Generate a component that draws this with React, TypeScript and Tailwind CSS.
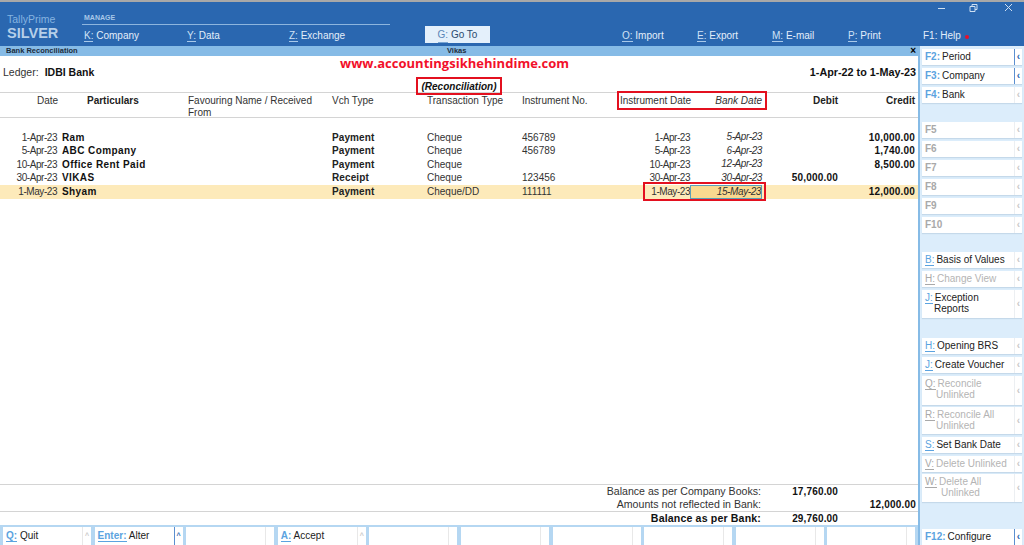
const font = { fontFamily: '"Liberation Sans", Arial, sans-serif' }

const rows = [
  { date: "1-Apr-23", name: "Ram", type: "Payment", mode: "Cheque", no: "456789", inst: "1-Apr-23", bank: "5-Apr-23", debit: "", credit: "10,000.00" },
  { date: "5-Apr-23", name: "ABC Company", type: "Payment", mode: "Cheque", no: "456789", inst: "5-Apr-23", bank: "6-Apr-23", debit: "", credit: "1,740.00" },
  { date: "10-Apr-23", name: "Office Rent Paid", type: "Payment", mode: "Cheque", no: "", inst: "10-Apr-23", bank: "12-Apr-23", debit: "", credit: "8,500.00" },
  { date: "30-Apr-23", name: "VIKAS", type: "Receipt", mode: "Cheque", no: "123456", inst: "30-Apr-23", bank: "30-Apr-23", debit: "50,000.00", credit: "" },
  { date: "1-May-23", name: "Shyam", type: "Payment", mode: "Cheque/DD", no: "111111", inst: "1-May-23", bank: "15-May-23", debit: "", credit: "12,000.00", active: true },
]

const cols = "grid grid-cols-[62px_126px_144px_95px_95px_98px_70px_72px_76px_78px]"

function TopItem({ k, label, width }: { k: string; label: string; width: string }) {
  return (
    <div className={`${width} shrink-0 text-[10px] leading-[12px] text-[#e3eefa] whitespace-nowrap`}>
      <span className="border-b border-[#a9c9ea] text-[#cfe2f6]">{k}:</span> {label}
    </div>
  )
}

function SideButton({
  k,
  label,
  height = "h-[16px]",
  top = "mt-[3px]",
  muted = false,
  arrow = false,
  indent = "",
  line2,
  plain = false,
}: {
  k: string
  label?: string
  height?: string
  top?: string
  muted?: boolean
  arrow?: boolean
  indent?: string
  line2?: string
  plain?: boolean
}) {
  const keyColor = muted ? "text-[#a9a9a9]" : "text-[#5ba3e0]"
  const textColor = muted ? "text-[#b4b4b4]" : "text-[#222]"
  return (
    <div className={`${height} ${top} flex w-[100px] shrink-0 bg-white shadow-[0_1px_1px_#c5d9ea]`}>
      <div className={`flex-1 pl-[3px] pt-[2px] text-[10px] leading-[11px] whitespace-nowrap`}>
        {label ? (
          <>
            <span className={`${plain ? "font-bold" : "border-b border-current"} ${keyColor}`}>{k}:</span>
            <span className={`ml-[2px] ${textColor}`}>{label}</span>
          </>
        ) : (
          <span className={`font-bold ${keyColor}`}>{k}</span>
        )}
        {line2 && <div className={`${textColor} ${indent}`}>{line2}</div>}
      </div>
      <div
        className={`flex w-[8px] items-center justify-center border-l text-[10px] font-bold leading-none ${
          arrow ? "border-[#5b8fd0] text-[#2a67b0]" : "border-[#eceff2] text-[#c8c8c8]"
        }`}
      >
        ‹
      </div>
    </div>
  )
}

function BottomButton({ k, label, arrow = false }: { k?: string; label?: string; arrow?: boolean }) {
  return (
    <div className="flex h-[18px] w-[88px] shrink-0 bg-white">
      <div className="flex-1 pl-[3px] pt-[3px] text-[10px] leading-[12px] whitespace-nowrap text-[#222]">
        {k && (
          <>
            <span className="border-b border-[#5ba3e0] font-bold text-[#5ba3e0]">{k}:</span> {label}
          </>
        )}
      </div>
      <div
        className={`flex w-[9px] items-center justify-center border-l text-[7px] font-bold ${
          arrow ? "border-[#5b8fd0] text-[#2a67b0]" : "border-[#e8e8e8] text-[#c8c8c8]"
        }`}
      >
        {k ? "^" : ""}
      </div>
    </div>
  )
}

export default function App() {
  return (
    <div style={font} className="flex h-[545px] w-[1024px] flex-col overflow-hidden bg-white">
      {/* Top bar */}
      <div className="relative flex h-[46px] shrink-0 border-t-2 border-[#a8a8a8] bg-[#2a67b0]">
        <div className="w-[82px] shrink-0 pl-[7px] pt-[11px]">
          <div className="text-[10.5px] leading-[12px] text-[#86b4e0]">TallyPrime</div>
          <div className="text-[14.5px] font-bold leading-[16px] text-[#b5cfe9]">SILVER</div>
        </div>
        <div className="w-[343px] shrink-0">
          <div className="mt-[11px] h-[12px] w-[308px] border-b border-[#8db5de] pl-[2px] text-[7px] font-bold leading-[10px] text-[#a8c8e8]">
            MANAGE
          </div>
          <div className="mt-[5px] flex pl-[2px]">
            <TopItem k="K" label="Company" width="w-[103px]" />
            <TopItem k="Y" label="Data" width="w-[102px]" />
            <TopItem k="Z" label="Exchange" width="w-[100px]" />
          </div>
        </div>
        <div className="mt-[24px] flex h-[17px] w-[65px] shrink-0 items-center justify-center bg-[#e4f0fb] text-[10px] text-[#2a4a6e]">
          <span className="border-b border-[#7aa6d4] text-[#5b86b8]">G:</span>&nbsp;Go To
        </div>
        <div className="ml-[132px] mt-[28px] flex">
          <TopItem k="O" label="Import" width="w-[75px]" />
          <TopItem k="E" label="Export" width="w-[75px]" />
          <TopItem k="M" label="E-mail" width="w-[76px]" />
          <TopItem k="P" label="Print" width="w-[75px]" />
          <div className="flex items-start text-[10px] leading-[12px] text-[#e3eefa] whitespace-nowrap">
            F1: Help
            <span className="ml-[4px] mt-[5px] h-[4px] w-[4px] rounded-full bg-[#e8102a]" />
          </div>
        </div>
        <svg className="absolute right-[12px] top-0" width="74" height="12" viewBox="0 0 74 12" fill="none" stroke="#cfe0f2" strokeWidth="1">
          <path d="M0 6.5h7" />
          <path d="M32 4.5h5v5h-5zM34 4.5v-2h5v5h-2" />
          <path d="M67 2l7 7M74 2l-7 7" />
        </svg>
      </div>

      <div className="flex min-h-0 flex-1">
        {/* Report area */}
        <div className="relative flex w-[918px] shrink-0 flex-col">
          <div className="flex h-[10px] shrink-0 items-center bg-[#86bbe6] pl-[6px] pr-[2px] text-[7.5px] font-bold text-[#1c2c3c]">
            <span className="w-[441px]">Bank Reconciliation</span>
            <span className="flex-1">Vikas</span>
            <span className="text-[10px] leading-[10px] text-black">×</span>
          </div>

          <div className="flex h-[36px] shrink-0 items-start pl-[3px] pr-[2px] pt-[10px] text-[10.5px] leading-[13px] text-[#333]">
            <span>Ledger:</span>
            <span className="ml-[6px] flex-1 font-bold text-[#111]">IDBI Bank</span>
            <span className="text-[10.8px] font-bold text-[#111]">1-Apr-22 to 1-May-23</span>
          </div>

          {/* Column heads */}
          <div className={`${cols} h-[26px] shrink-0 border-y border-[#d4d4d4] pt-[2px] text-[10px] leading-[12px] text-[#333]`}>
            <div className="pl-[37px]">Date</div>
            <div className="pl-[25px] font-bold text-[#222]">Particulars</div>
            <div>Favouring Name / Received From</div>
            <div>Vch Type</div>
            <div>Transaction Type</div>
            <div>Instrument No.</div>
            <div className="text-right whitespace-nowrap">Instrument Date</div>
            <div className="text-right italic">Bank Date</div>
            <div className="text-right font-bold text-[#222]">Debit</div>
            <div className="pr-[1px] text-right font-bold text-[#222]">Credit</div>
          </div>

          {/* Entries */}
          <div className="mt-[13px] flex flex-col">
            {rows.map((r) => (
              <div
                key={r.date}
                className={`${cols} h-[13.5px] items-center text-[10px] leading-[12px] text-[#333] ${r.active ? "bg-[#fdeaba]" : ""}`}
              >
                <div className="pr-[5px] text-right tracking-[-0.45px]">{r.date}</div>
                <div className="font-bold tracking-[0.4px] text-[#111]">{r.name}</div>
                <div />
                <div className="font-bold tracking-[0.1px] text-[#222]">{r.type}</div>
                <div>{r.mode}</div>
                <div>{r.no}</div>
                <div className="text-right tracking-[-0.45px]">{r.inst}</div>
                <div
                  className={`h-full text-right italic tracking-[-0.4px] ${r.active ? "border border-[#5aa0b8] bg-[#f9d98f]" : ""}`}
                >
                  {r.bank}
                </div>
                <div className="text-right font-bold tracking-[0.2px] text-[#111]">{r.debit}</div>
                <div className="pr-[1px] text-right font-bold tracking-[0.2px] text-[#111]">{r.credit}</div>
              </div>
            ))}
          </div>

          {/* Totals */}
          <div className="mt-auto text-[10.6px] leading-[13px] text-[#333]">
            <div className="h-[27px] border-t border-[#d4d4d4]">
              <div className="flex">
                <div className="w-[761px] text-right">Balance as per Company Books:</div>
                <div className="w-[77px] text-right font-bold tracking-[0.15px] text-[#111] text-[10px]">17,760.00</div>
              </div>
              <div className="flex">
                <div className="w-[761px] text-right">Amounts not reflected in Bank:</div>
                <div className="w-[155px] text-right font-bold tracking-[0.2px] text-[#111] text-[10px]">12,000.00</div>
              </div>
            </div>
            <div className="h-[14px] border-t border-[#d4d4d4]">
              <div className="flex font-bold text-[#111]">
                <div className="w-[761px] text-right tracking-[0.15px]">Balance as per Bank:</div>
                <div className="w-[77px] text-right tracking-[0.15px] text-[10px]">29,760.00</div>
              </div>
            </div>
          </div>

          {/* Bottom buttons */}
          <div className="flex h-[20px] shrink-0 items-end gap-[3.6px] border-t-2 border-[#b5d7f2] bg-[#b5d7f2] pl-[3px]">
            <BottomButton k="Q" label="Quit" />
            <BottomButton k="Enter" label="Alter" arrow />
            <BottomButton />
            <BottomButton k="A" label="Accept" />
            <BottomButton />
            <BottomButton />
            <BottomButton />
            <BottomButton />
            <BottomButton />
            <BottomButton />
          </div>

          {/* Annotations laid over the report */}
          <div
            style={{ fontFamily: '"Open Sans", sans-serif' }}
            className="absolute left-[340px] top-[10px] whitespace-nowrap text-[13px] font-bold leading-[14px] tracking-[0.02px] text-[#f2102a]"
          >
            www.accountingsikhehindime.com
          </div>
          <div className="absolute left-[416px] top-[31px] flex h-[18px] w-[86px] items-center justify-center border-2 border-[#e3101f] text-[10px] font-bold italic text-[#111]">
            (Reconciliation)
          </div>
          <div className="absolute left-[617px] top-[45px] h-[19px] w-[150px] border-2 border-[#e3101f]" />
          <div className="absolute left-[643px] top-[136px] h-[19px] w-[123px] border-2 border-[#e3101f]" />
        </div>

        {/* Right button panel */}
        <div className="flex flex-1 flex-col border-l-2 border-[#86bbe6] bg-[#dcedfb] pl-[2px] pt-[3px]">
          <SideButton k="F2" label="Period" top="mt-0" arrow plain />
          <SideButton k="F3" label="Company" top="mt-[2.75px]" arrow plain />
          <SideButton k="F4" label="Bank" top="mt-[2.75px]" plain />
          <SideButton k="F5" muted top="mt-[19.5px]" />
          <SideButton k="F6" muted />
          <SideButton k="F7" muted />
          <SideButton k="F8" muted />
          <SideButton k="F9" muted />
          <SideButton k="F10" muted />
          <SideButton k="B" label="Basis of Values" top="mt-[19px]" />
          <SideButton k="H" label="Change View" muted />
          <SideButton k="J" label="Exception" line2="Reports" height="h-[28px]" indent="pl-[9px]" />
          <SideButton k="H" label="Opening BRS" top="mt-[20px]" />
          <SideButton k="J" label="Create Voucher" />
          <SideButton k="Q" label="Reconcile" line2="Unlinked" height="h-[29px]" indent="pl-[11px]" muted />
          <SideButton k="R" label="Reconcile All" line2="Unlinked" height="h-[27px]" top="mt-[2px]" indent="pl-[11px]" muted />
          <SideButton k="S" label="Set Bank Date" />
          <SideButton k="V" label="Delete Unlinked" muted />
          <SideButton k="W" label="Delete All" line2="Unlinked" height="h-[28px]" top="mt-[2px]" indent="pl-[16px]" muted />
          <SideButton k="F12" label="Configure" top="mt-auto" arrow plain />
        </div>
      </div>
    </div>
  )
}
